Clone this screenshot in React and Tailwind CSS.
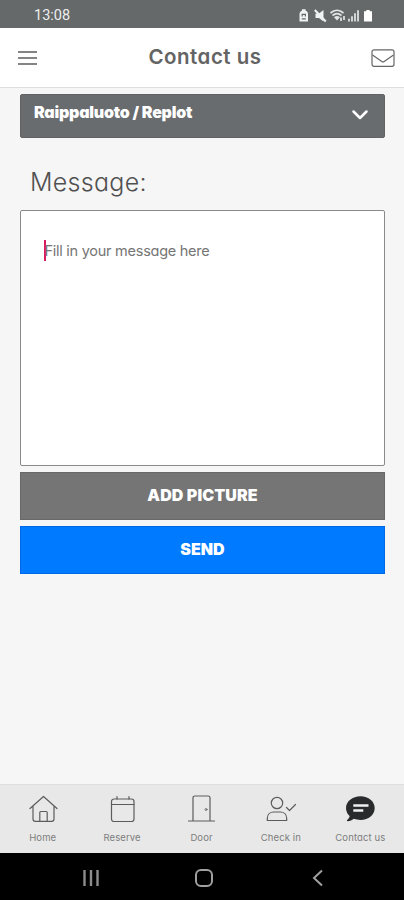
import React, { useState } from 'react';

const tabs = [
  { id: 'home', label: 'Home', icon: HomeIcon },
  { id: 'reserve', label: 'Reserve', icon: CalendarIcon },
  { id: 'door', label: 'Door', icon: DoorIcon },
  { id: 'checkin', label: 'Check in', icon: CheckInIcon },
  { id: 'contact', label: 'Contact us', icon: ChatIcon },
];

function HomeIcon() {
  return (
    <svg width="30" height="30" viewBox="0 0 30 30" fill="none" stroke="#5c5c5c" strokeWidth="1.2" strokeLinecap="round" strokeLinejoin="round">
      <path d="M2 14.500 15.500 2.500 29 14.500M5 12v13c0 1.400.9 2.300 2.300 2.300h16.400c1.400 0 2.300-.9 2.300-2.300V12" />
      <path d="M11.800 27.300V18.500c0-.6.4-1 1-1h5.400c.6 0 1 .4 1 1v8.800" />
    </svg>
  );
}

function CalendarIcon() {
  return (
    <svg width="30" height="30" viewBox="0 0 30 30" fill="none" stroke="#5c5c5c" strokeWidth="1.2" strokeLinecap="round" strokeLinejoin="round">
      <rect x="4.500" y="5" width="22.500" height="22.500" rx="2.500" />
      <path d="M4.500 10.500H27M10 2.500V5M22 2.500V5" />
    </svg>
  );
}

function DoorIcon() {
  return (
    <svg width="30" height="30" viewBox="0 0 30 30" fill="none" stroke="#5c5c5c" strokeWidth="1.2" strokeLinecap="round" strokeLinejoin="round">
      <path d="M2.500 27h26M7 27V3.800C7 2.600 7.800 2 8.800 2h13.400c1.100 0 1.800.7 1.800 1.800V27" />
      <circle cx="20" cy="15.500" r="1" strokeWidth="0.800" />
    </svg>
  );
}

function CheckInIcon() {
  return (
    <svg width="30" height="30" viewBox="0 0 30 30" fill="none" stroke="#5c5c5c" strokeWidth="1.2" strokeLinecap="round" strokeLinejoin="round">
      <circle cx="11" cy="9" r="5.700" />
      <path d="M1.300 26.500v-2.300c0-4 3-6.200 6.400-6.200h6.600c3.400 0 6.400 2.200 6.400 6.200v2.300z" />
      <path d="m20.500 13.500 3 3 6-6" />
    </svg>
  );
}

function ChatIcon() {
  return (
    <svg width="30" height="30" viewBox="0 0 30 30">
      <path fill="#282a2c" d="M15.500 2.200C7.500 2.200 1 7.300 1 14c0 3.200 1.400 6 3.700 8.100-.4 1.800-1.300 3-2.600 4-.5.500-.2 1.100.5 1.100 2.500 0 4.500-.9 6.100-2.400 2 .7 4.300 1.100 6.800 1.100 8.200 0 14.200-5.200 14.200-11.900S23.500 2.200 15.500 2.200z" />
      <path stroke="#f0f0f0" strokeWidth="2.600" d="M8.300 11.500h15.200M8.300 16.500h10" />
    </svg>
  );
}

function StatusIcons() {
  return (
    <svg width="76" height="16" viewBox="0 0 76 16" fill="none">
      {/* battery saver */}
      <path fill="#f1f2f2" d="M.5 6C.5 4 2 3 3 2.800V1.300h3.600v1.500C7.800 3 9 4 9 6v7.500H.5z" />
      <path stroke="#656a6b" strokeWidth="1.200" d="M3.200 8.500V6.300h3.200v2.200M2.800 10.800h4" />
      {/* muted */}
      <path fill="#f1f2f2" d="M16.500 5.500h3.500l4.500-3.500v11.500L20 10h-3.500z" />
      <path stroke="#f1f2f2" strokeWidth="2" d="m15.800 2 11 11.500" />
      {/* wifi */}
      <path stroke="#e3e5e5" strokeWidth="1.700" d="M31.500 5c4-3.600 9-3.600 13 0M33.500 7.500c3-2.600 6-2.600 9 0" />
      <path fill="#e3e5e5" d="M35 9.200c2-1.500 4-1.500 6 0l-3 3.300z" />
      <path stroke="#e3e5e5" strokeWidth="1.700" d="M42 13V9.500M45 8v4" />
      {/* signal */}
      <path stroke="#d8dada" strokeWidth="1.900" d="M50 13.500v-2.800M53 13.500V8.300M56 13.500V5.300M59 13.500V2.300" />
      {/* battery */}
      <path fill="#fff" d="M65 3.300h2.300V2h3.400v1.300H73v10.200h-8z" />
    </svg>
  );
}

function Header() {
  return (
    <header className="flex h-[60px] shrink-0 items-center justify-between border-b border-[#dedede] bg-white pl-[18px] pr-[9px]">
      <button aria-label="Menu" className="flex flex-col gap-[4px]">
        <span className="h-[2px] w-[19px] bg-[#858585]" />
        <span className="h-[2px] w-[19px] bg-[#858585]" />
        <span className="h-[2px] w-[19px] bg-[#858585]" />
      </button>
      <h1 className="mb-[2px] pl-[2px] text-[20.500px] font-semibold leading-7 tracking-[0.500px] text-[#646464]">Contact us</h1>
      <button aria-label="Inbox">
        <svg width="24" height="20" viewBox="0 0 24 20" fill="none" stroke="#666" strokeWidth="1.200" strokeLinejoin="round">
          <rect x="1" y="1.800" width="22" height="16.500" rx="2" />
          <path d="m1.500 7 9.300 6.500c.8.600 1.600.6 2.400 0L22.500 7" />
        </svg>
      </button>
    </header>
  );
}

export default function App() {
  const [activeTab, setActiveTab] = useState('contact');

  return (
    <div className="flex h-[900px] w-[404px] flex-col overflow-hidden bg-[#f6f6f6] font-['Inter',sans-serif] [font-feature-settings:'cv11']">
      <div className="flex h-[28px] shrink-0 items-center justify-between bg-[#65696a] pl-[34px] pr-[29px] pt-[4px]">
        <span className="font-['Roboto',sans-serif] text-[14.500px] text-[#eeeeee]">13:08</span>
        <StatusIcons />
      </div>

      <Header />

      <main className="flex flex-1 flex-col px-5 pt-[6px]">
        <button className="flex h-[44px] w-[365px] shrink-0 items-start justify-between rounded-[2px] border border-[#606263] bg-[#696c6e] pl-[13px] pr-[15px] pt-[5px] text-white">
          <span className="text-[16px] font-black leading-6 tracking-[-0.220px]">Raippaluoto / Replot</span>
          <svg className="mt-[8px]" width="18" height="14" viewBox="0 0 18 14" fill="none" stroke="#fff" strokeWidth="2.500" strokeLinecap="round" strokeLinejoin="round">
            <path d="m2.500 3.500 6.500 6.500 6.500-6.500" />
          </svg>
        </button>

        <h2 className="mt-[26px] pl-[10px] text-[25px] font-light leading-[36px] tracking-[0.300px] text-[#505050]">Message:</h2>

        <div className="mt-[10px] flex h-[256px] w-[365px] shrink-0 items-start rounded-[2px] border border-[#8a8a8a] bg-white pl-[23px] pt-[29px]">
          <span className="h-[21px] w-[1.500px] bg-[#d81b60]" />
          <span className="-ml-[1px] text-[14.500px] leading-[22px] tracking-[-0.260px] text-[#757575]">Fill in your message here</span>
        </div>

        <button className="mt-[6px] h-[48px] w-[365px] shrink-0 border border-[#686868] bg-[#757575] pb-[3px] text-[16px] font-black tracking-[0.100px] text-white">
          ADD PICTURE
        </button>
        <button className="mt-[6px] h-[48px] w-[365px] shrink-0 border border-[#0069e8] bg-[#007aff] pb-[3px] text-[16px] font-black text-white">
          SEND
        </button>
      </main>

      <nav className="grid h-[69px] shrink-0 grid-cols-5 border-t border-[#dfdfdf] bg-[#e8e8e8] pl-[3px] pr-1">
        {tabs.map((tab) => {
          const Icon = tab.icon;
          return (
            <button
              key={tab.id}
              onClick={() => setActiveTab(tab.id)}
              aria-current={activeTab === tab.id ? 'page' : undefined}
              className="flex flex-col items-center pt-[9px]"
            >
              <Icon />
              <span className="mt-[7px] whitespace-nowrap text-[9.500px] leading-[14px] tracking-[0.100px] text-[#7d7d7d]">{tab.label}</span>
            </button>
          );
        })}
      </nav>

      <div className="flex h-[47px] shrink-0 items-center bg-black pb-px pt-[3px]">
        <svg className="ml-[82px]" width="18" height="18" viewBox="0 0 18 18" stroke="#8c8c8c" strokeWidth="2.400">
          <path d="M2.500 1v16M9 1v16M15.500 1v16" />
        </svg>
        <svg className="ml-[94px]" width="20" height="20" viewBox="0 0 20 20" fill="none" stroke="#a0a0a0" strokeWidth="2">
          <rect x="2" y="2" width="16" height="16" rx="5" />
        </svg>
        <svg className="ml-[96px]" width="16" height="18" viewBox="0 0 16 18" fill="none" stroke="#a0a0a0" strokeWidth="2">
          <path d="M12 1.500 4 9l8 7.500" />
        </svg>
      </div>
    </div>
  );
}
